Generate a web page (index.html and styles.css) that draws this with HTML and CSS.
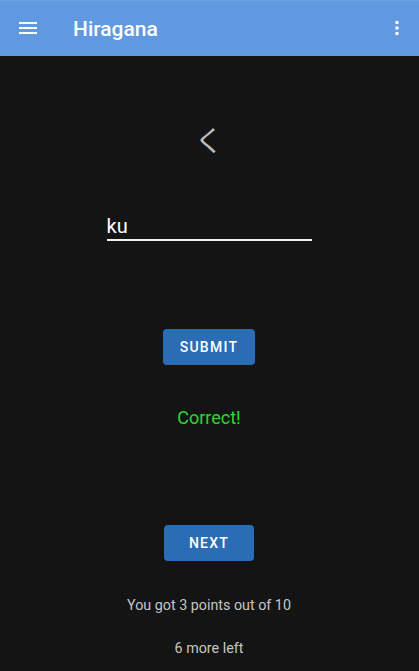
FILE: index.html
```html
<!DOCTYPE html>
<html>
<head>
<meta charset="utf-8">
<link rel="stylesheet" href="styles.css">
</head>
<body>
<header class="appbar">
  <svg class="icon menu" viewBox="0 0 24 24" width="24" height="24"><path fill="#fff" d="M3 18h18v-2H3v2zm0-5h18v-2H3v2zm0-7v2h18V6H3z"/></svg>
  <h1 class="title">Hiragana</h1>
  <svg class="icon more" viewBox="0 0 24 24" width="24" height="24"><circle cx="12" cy="6.5" r="1.8" fill="#fff"/><circle cx="12" cy="12" r="1.8" fill="#fff"/><circle cx="12" cy="17.5" r="1.8" fill="#fff"/></svg>
</header>
<main class="quiz">
  <div class="kana">く</div>
  <input class="answer" type="text" value="ku">
  <button class="btn submit">SUBMIT</button>
  <p class="result">Correct!</p>
  <button class="btn next">NEXT</button>
  <p class="info score">You got 3 points out of 10</p>
  <p class="info left">6 more left</p>
</main>
</body>
</html>
```

FILE: styles.css
```css
html, body {
  margin: 0;
  padding: 0;
  background: #141414;
  font-family: Roboto, "Noto Sans", sans-serif;
  height: 100%;
}
.appbar {
  height: 56px;
  box-sizing: border-box;
  background: #6199e0;
  border-top: 1px solid #6fa3e6;
  display: flex;
  align-items: center;
  padding: 0 10px 0 16px;
}
.icon { display: block; flex: none; }
.menu { margin-top: -1px; }
.title {
  margin: 0 0 0 33px;
  color: #fff;
  font-size: 21px;
  font-weight: 500;
  flex: 1;
}
.more { margin-top: -1px; }
.quiz {
  width: 418px;
  display: flex;
  flex-direction: column;
  align-items: center;
}
.kana {
  margin-top: 63px;
  height: 40px;
  line-height: 40px;
  font-size: 29px;
  color: #bdbdbd;
  font-family: "Noto Sans CJK JP", sans-serif;
}
.answer {
  margin-top: 50px;
  width: 205px;
  height: 32px;
  box-sizing: border-box;
  padding: 4px 0 0 0;
  border: none;
  border-bottom: 2px solid #f2f2f2;
  background: transparent;
  color: #fff;
  font-family: Roboto, sans-serif;
  font-size: 20px;
  outline: none;
}
.btn {
  height: 36px;
  border: none;
  border-radius: 4px;
  background: #2a6db5;
  color: #fff;
  font-family: Roboto, sans-serif;
  font-weight: 500;
  font-size: 14px;
  letter-spacing: 1.25px;
  padding: 0;
}
.submit { margin-top: 88px; width: 92px; }
.next { margin-top: 95px; width: 90px; }
.result {
  margin: 41px 0 0;
  line-height: 24px;
  font-size: 18px;
  color: #2fd62f;
}
.info {
  margin: 0;
  line-height: 20px;
  font-size: 14.3px;
  color: #c6c6c6;
}
.score { margin-top: 34px; }
.left { margin-top: 23px; }
```
